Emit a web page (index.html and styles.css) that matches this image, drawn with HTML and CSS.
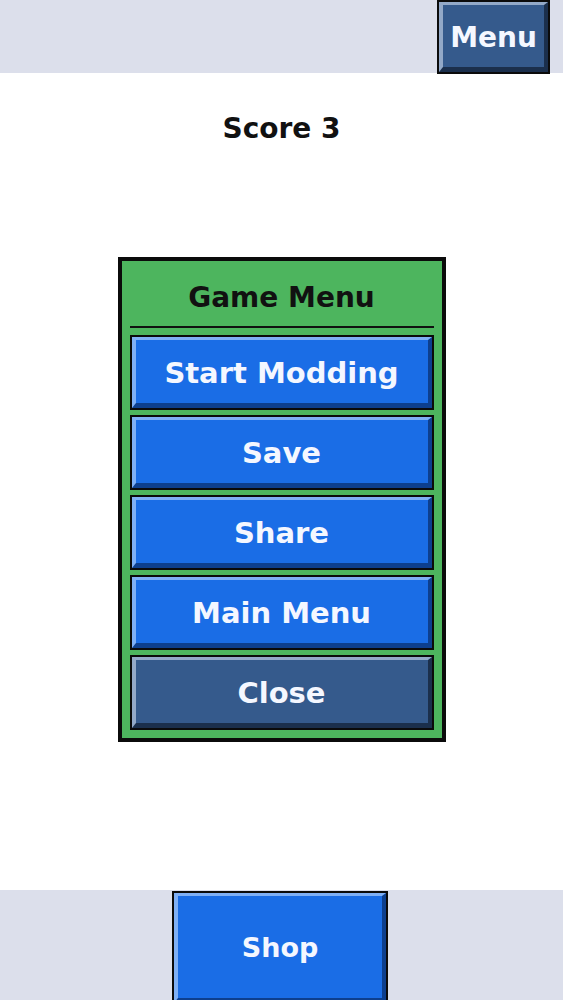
FILE: index.html
```html
<!DOCTYPE html>
<html>
<head>
<meta charset="utf-8">
<link rel="stylesheet" href="styles.css">
</head>
<body>
<div class="screen">
  <header class="top-bar">
    <button class="btn btn-dark btn-menu"><span class="face">Menu</span></button>
  </header>
  <main class="content">
    <div class="score">Score 3</div>
    <section class="panel">
      <div class="panel-title">Game Menu</div>
      <div class="divider"></div>
      <div class="menu-list">
        <button class="btn btn-blue btn-item"><span class="face">Start Modding</span></button>
        <button class="btn btn-blue btn-item"><span class="face">Save</span></button>
        <button class="btn btn-blue btn-item"><span class="face">Share</span></button>
        <button class="btn btn-blue btn-item"><span class="face">Main Menu</span></button>
        <button class="btn btn-dark btn-item"><span class="face">Close</span></button>
      </div>
    </section>
  </main>
  <footer class="bottom-bar">
    <button class="btn btn-blue btn-shop"><span class="face">Shop</span></button>
  </footer>
</div>
</body>
</html>
```
FILE: styles.css
```css
html, body {
  margin: 0;
  padding: 0;
  background: #ffffff;
}
body {
  font-family: "DejaVu Sans", "Noto Sans", sans-serif;
  font-weight: bold;
}
.screen {
  width: 563px;
  height: 1000px;
  display: flex;
  flex-direction: column;
  overflow: hidden;
}
.top-bar {
  height: 73px;
  background: #dcdfeb;
  display: flex;
  justify-content: flex-end;
  align-items: flex-start;
  padding-right: 13px;
  flex-shrink: 0;
}
.btn {
  display: block;
  padding: 0;
  margin: 0;
  border: 2px solid #0b0b0b;
  background: none;
  font: inherit;
  cursor: pointer;
}
.face {
  display: flex;
  align-items: center;
  justify-content: center;
  width: 100%;
  height: 100%;
  box-sizing: border-box;
  border-style: solid;
  border-width: 3px 4px 5px 4px;
  padding-top: 3px;
  color: #f4f7ff;
}
.btn-blue .face {
  background: #1a6de6;
  border-color: #7fb0f6 #0d3f8e #0d3f8e #7fb0f6;
}
.btn-dark .face {
  background: #355a8c;
  border-color: #93a9c8 #1b2f4c #1b2f4c #93a9c8;
}
.btn-menu {
  width: 113px;
  height: 74px;
  flex-shrink: 0;
  font-size: 28px;
}
.content {
  display: flex;
  flex-direction: column;
  align-items: center;
}
.score {
  margin-top: 36px;
  height: 40px;
  line-height: 40px;
  font-size: 28px;
  color: #111111;
}
.panel {
  margin-top: 108px;
  width: 328px;
  box-sizing: border-box;
  border: 4px solid #0b0b0b;
  background: #4db55e;
  padding: 8px;
}
.panel-title {
  height: 57px;
  line-height: 57px;
  text-align: center;
  font-size: 28px;
  color: #111111;
}
.divider {
  height: 2px;
  background: #111111;
  margin-bottom: 7px;
}
.menu-list {
  display: flex;
  flex-direction: column;
  gap: 5px;
}
.btn-item {
  width: 100%;
  height: 75px;
  font-size: 29px;
}
.bottom-bar {
  margin-top: auto;
  height: 110px;
  background: #dcdfeb;
  display: flex;
  justify-content: center;
  align-items: flex-start;
  padding-top: 1px;
  box-sizing: border-box;
  flex-shrink: 0;
}
.btn-shop {
  width: 216px;
  height: 114px;
  margin-right: 3px;
  font-size: 27px;
  flex-shrink: 0;
}
.btn-shop .face {
  padding-top: 0;
}
```
